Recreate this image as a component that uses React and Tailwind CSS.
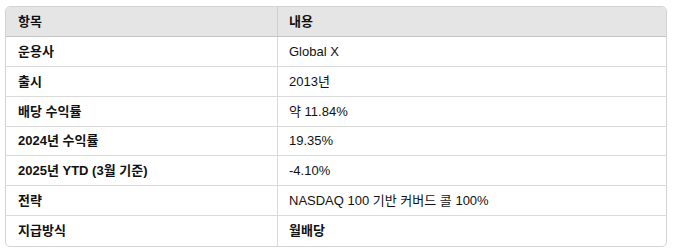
import React from "react";

const rows = [
	{ label: "운용사", value: "Global X" },
	{ label: "출시", value: "2013년" },
	{ label: "배당 수익률", value: "약 11.84%" },
	{ label: "2024년 수익률", value: "19.35%", short: true },
	{ label: "2025년 YTD (3월 기준)", value: "-4.10%" },
	{ label: "전략", value: "NASDAQ 100 기반 커버드 콜 100%" },
	{ label: "지급방식", value: "월배당", bold: true },
];

export default function App() {
	return (
		<div className="w-[673px] h-[251px] bg-white pt-[6px] pl-[5px]">
			<div
				className="w-[662px] overflow-hidden rounded-[5px] border border-[#d3d3d3] text-[13px] text-[#111]"
				style={{ fontFamily: '"Liberation Sans", "Noto Sans CJK KR", sans-serif' }}
			>
				{/* HEADER */}
				<div className="flex h-[30px] border-b border-[#c4c4c4] bg-[#e5e5e5] font-bold">
					<div className="flex w-[272px] items-center border-r border-[#cfcfcf] pl-[12px]">
						항목
					</div>
					<div className="flex flex-1 items-center pl-[11px]">내용</div>
				</div>

				{/* ROWS */}
				{rows.map((row, idx) => (
					<div
						key={idx}
						className={`flex ${row.short ? "h-[29px]" : "h-[30px]"} ${
							idx < rows.length - 1 ? "border-b border-[#dadada]" : ""
						}`}
					>
						<div className="flex w-[272px] items-center border-r border-[#dadada] pl-[12px] font-bold">
							{row.label}
						</div>
						<div
							className={`flex flex-1 items-center pl-[11px] ${
								row.bold ? "font-bold" : ""
							}`}
						>
							{row.value}
						</div>
					</div>
				))}
			</div>
		</div>
	);
}
